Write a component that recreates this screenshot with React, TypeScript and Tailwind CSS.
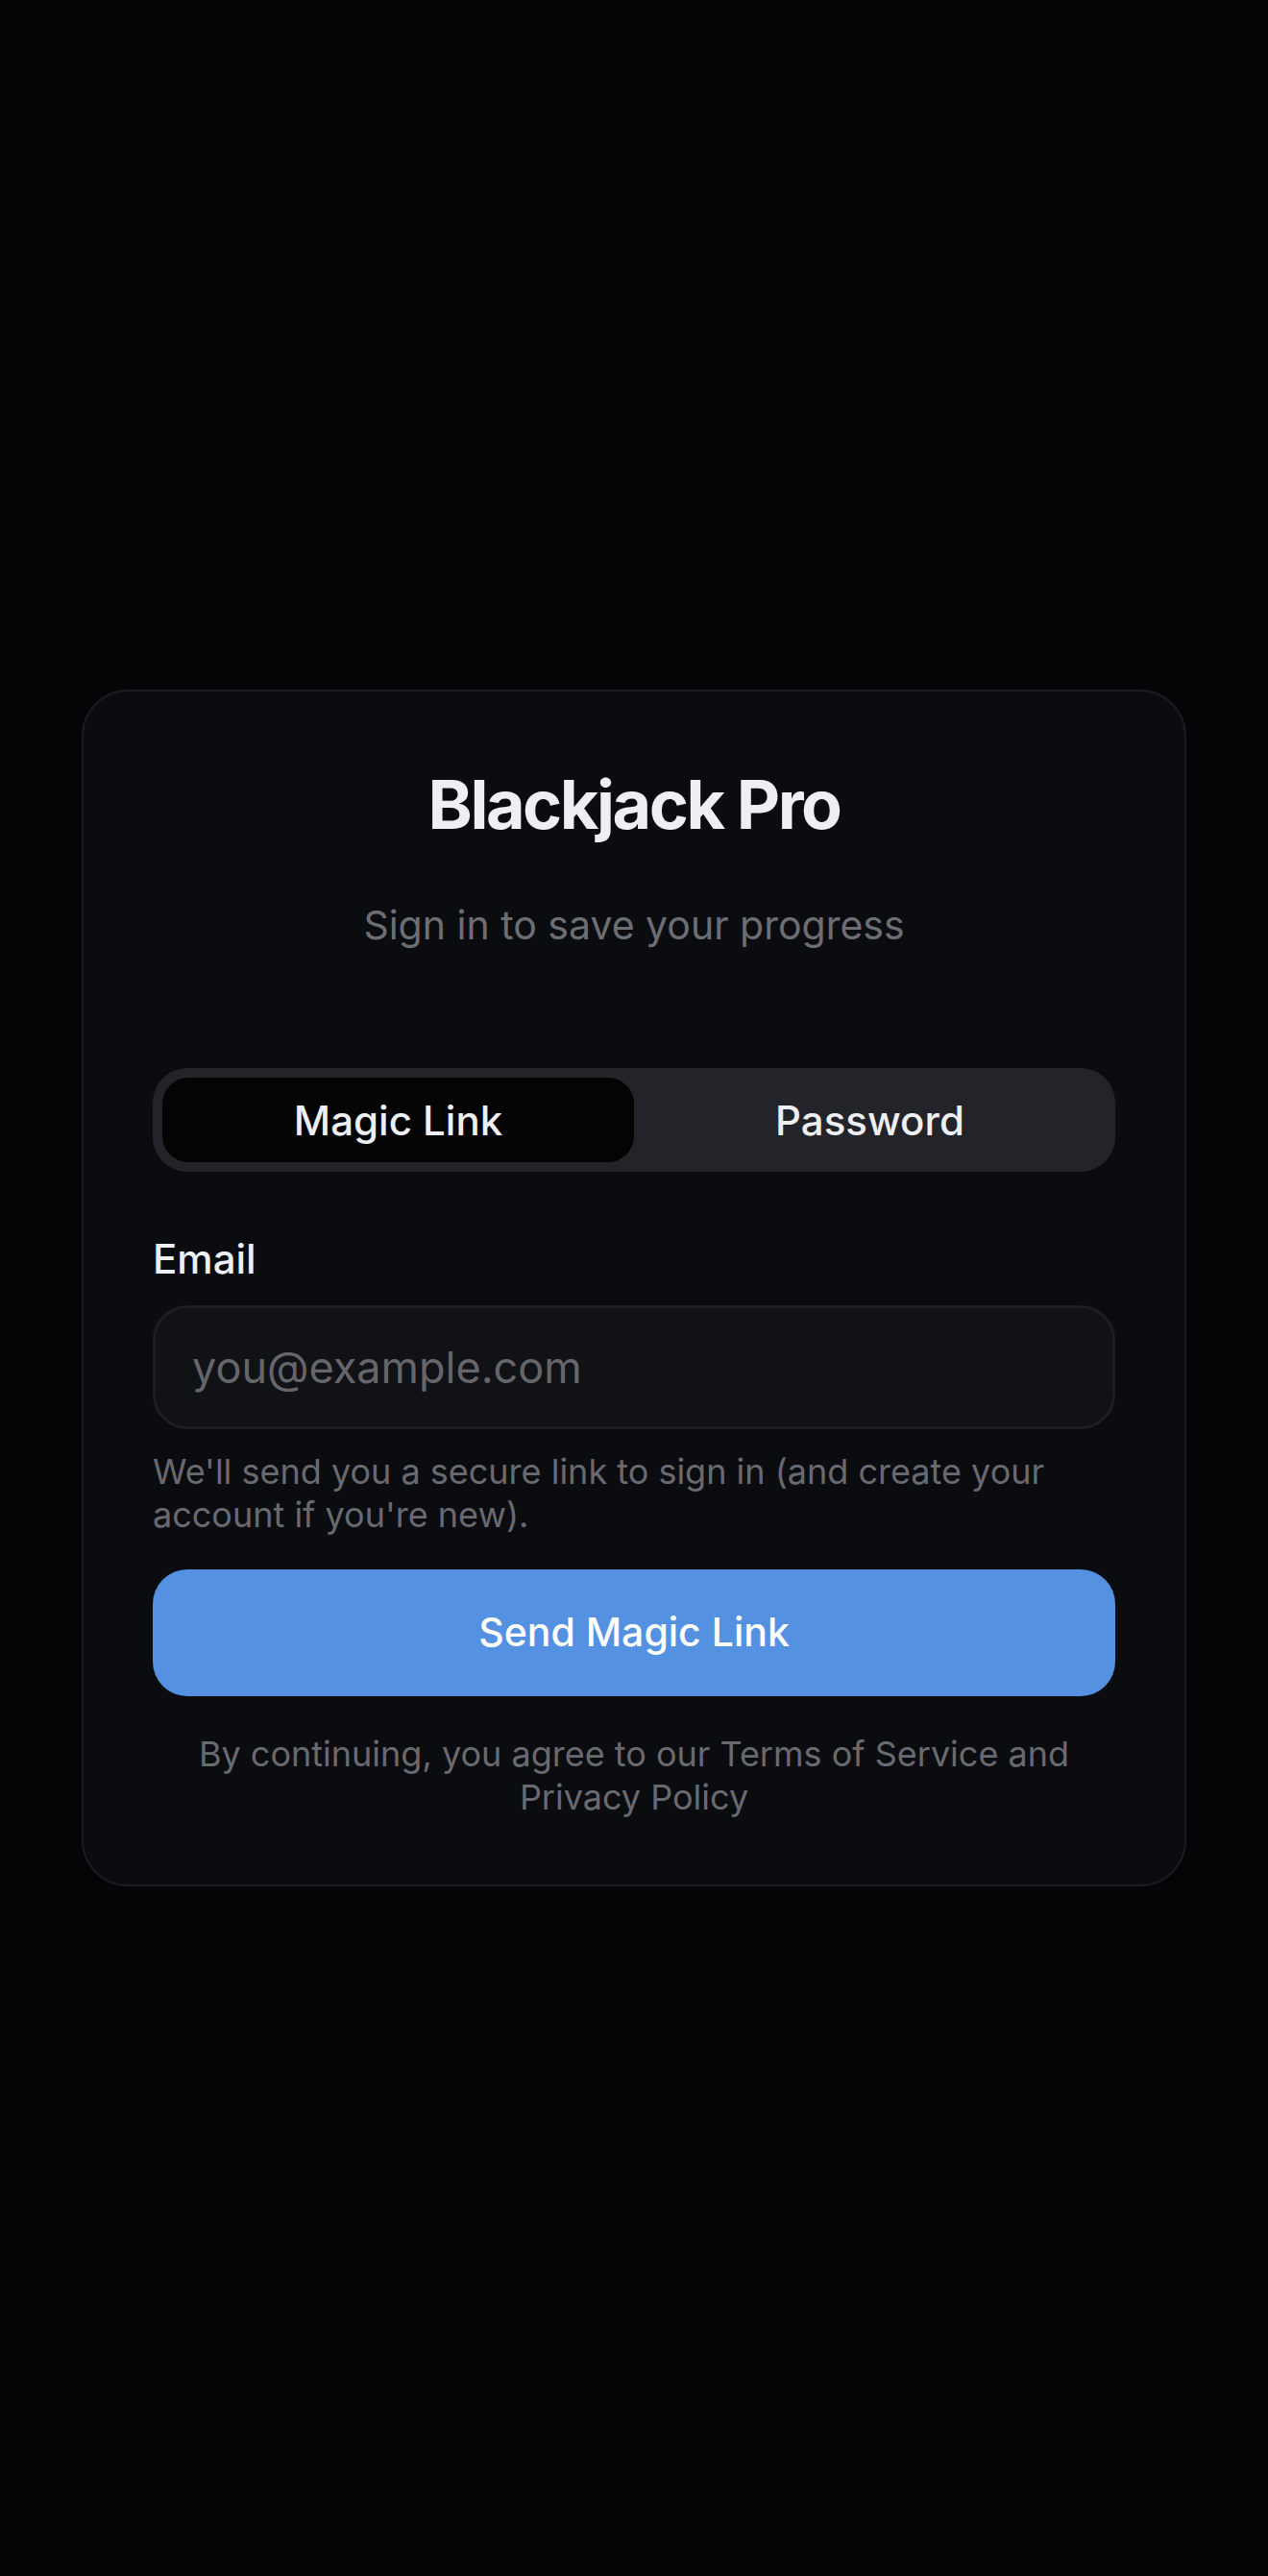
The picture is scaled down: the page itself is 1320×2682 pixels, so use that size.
import { useState } from "react";

type Mode = "magic" | "password";

export default function App() {
  const [mode, setMode] = useState<Mode>("magic");
  const [email, setEmail] = useState("");

  const tabClass = (active: boolean) =>
    active
      ? "flex-1 h-[88px] rounded-[27px] bg-[#040405] text-[42px] font-medium text-[#eeeff2]"
      : "flex-1 h-[88px] rounded-[27px] bg-transparent text-[42px] font-medium text-[#eeeff2]";

  return (
    <div className="min-h-screen bg-[#050507] flex items-center justify-center px-[85px] font-['Inter',sans-serif]">
      <div className="w-full rounded-[48px] border-2 border-[#1b1c20] bg-[#0b0c10] px-[72px] pt-[70px] pb-[68px]">
        <h1 className="text-center text-[70px] leading-[96px] font-bold tracking-[-0.035em] text-[#eeeff2]">
          Blackjack Pro
        </h1>
        <p className="mt-[46px] text-center text-[41px] leading-[63px] text-[#6d6e74]">
          Sign in to save your progress
        </p>

        {/* sign-in method switch */}
        <div className="mt-[117px] flex rounded-[36px] bg-[#232429] p-[10px]">
          <button className={tabClass(mode === "magic")} onClick={() => setMode("magic")}>
            Magic Link
          </button>
          <button className={tabClass(mode === "password")} onClick={() => setMode("password")}>
            Password
          </button>
        </div>

        <label className="mt-[59px] block text-[42px] leading-[63px] font-medium text-[#eeeff2]">
          Email
        </label>
        <input
          type="email"
          value={email}
          onChange={(e) => setEmail(e.target.value)}
          placeholder="you@example.com"
          className="mt-[17px] block h-[129px] w-full rounded-[36px] border-[3px] border-[#1d1e23] bg-[#111216] px-[38px] text-[45px] text-[#eeeff2] placeholder:text-[#65666c] outline-none"
        />
        <p className="mt-[22px] text-[36px] leading-[45px] text-[#696a70]">
          We'll send you a secure link to sign in (and create your account if you're new).
        </p>

        <button className="mt-[34px] h-[132px] w-full rounded-[36px] bg-[#5591e1] text-[41px] font-medium text-white">
          Send Magic Link
        </button>

        <p className="mt-[38px] text-center text-[36px] leading-[45px] text-[#696a70]">
          By continuing, you agree to our Terms of Service and Privacy Policy
        </p>
      </div>
    </div>
  );
}
